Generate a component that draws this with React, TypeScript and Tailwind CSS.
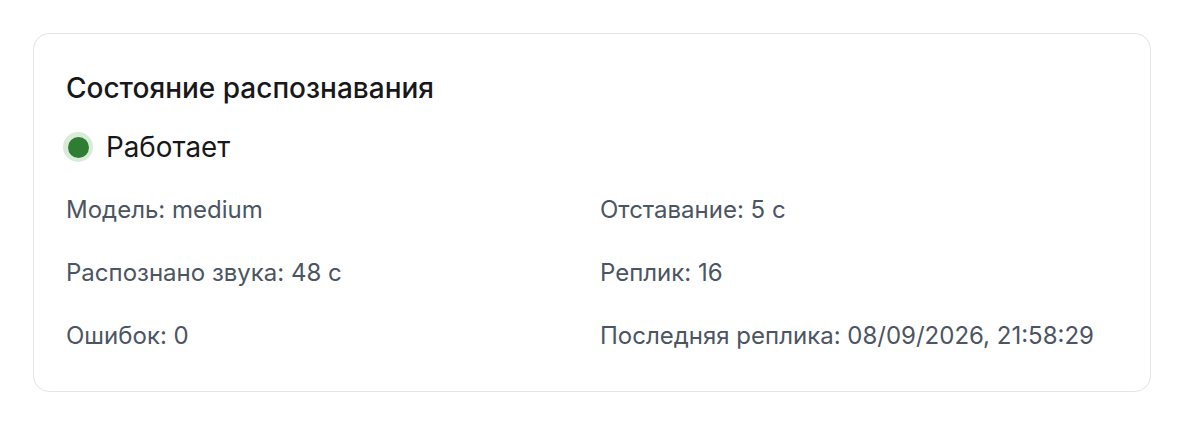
const rows: [string, string][] = [
  ['Модель: medium', 'Отставание: 5 с'],
  ['Распознано звука: 48 с', 'Реплик: 16'],
  ['Ошибок: 0', 'Последняя реплика: 08/09/2026, 21:58:29'],
]

export default function App() {
  return (
    <div className="min-h-screen bg-white p-[33px] font-['Inter',sans-serif]">
      <div className="rounded-2xl border border-[#e4e4e7] bg-white px-8 pt-[37px] pb-[39px]">
        <h2 className="text-[28px] font-medium leading-[34px] text-[#18181b]">
          Состояние распознавания
        </h2>
        <div className="mt-[25px] flex items-center gap-[13px]">
          <span className="ml-[-3px] flex h-[30px] w-[30px] items-center justify-center rounded-full bg-[#d9ebd9]">
            <span className="h-[21px] w-[21px] rounded-full bg-[#2e7d32]" />
          </span>
          <span className="text-[27.8px] leading-[34px] text-[#18181b]">Работает</span>
        </div>
        <div className="mt-[30px] grid grid-cols-2 gap-x-4 gap-y-[31px] text-[24px] leading-[32px] text-[#4b5563]">
          {rows.map(([left, right]) => (
            <>
              <div key={left}>{left}</div>
              <div key={right}>{right}</div>
            </>
          ))}
        </div>
      </div>
    </div>
  )
}
